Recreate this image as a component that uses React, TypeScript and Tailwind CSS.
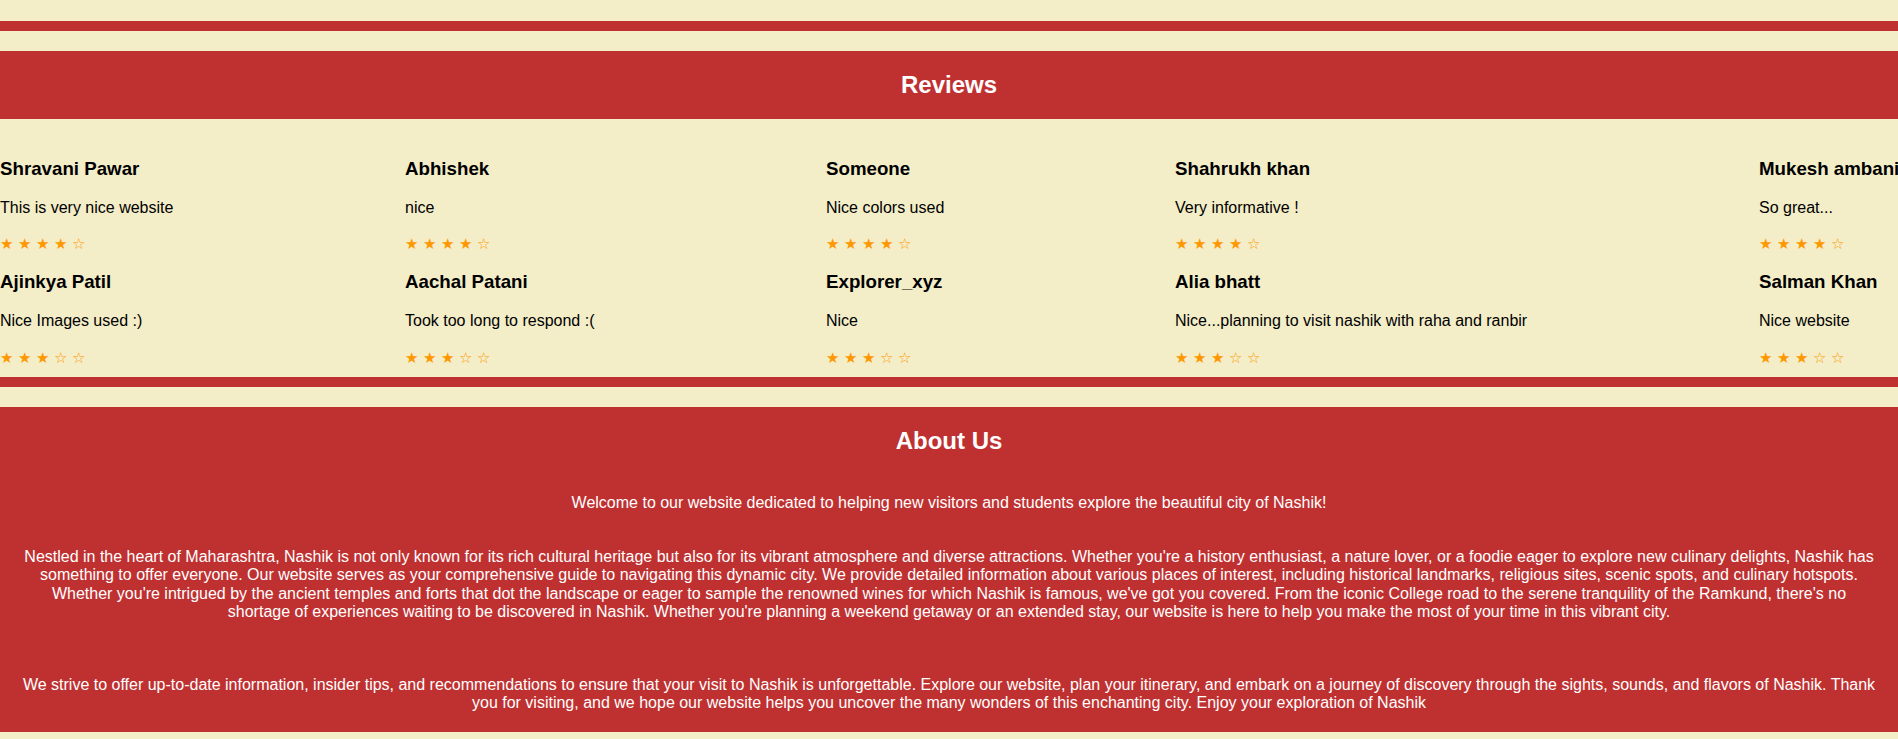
import React from "react";

type Review = { name: string; text: string; stars: number };

const reviews: Review[] = [
  { name: "Shravani Pawar", text: "This is very nice website", stars: 4 },
  { name: "Abhishek", text: "nice", stars: 4 },
  { name: "Someone", text: "Nice colors used", stars: 4 },
  { name: "Shahrukh khan", text: "Very informative !", stars: 4 },
  { name: "Mukesh ambani", text: "So great...", stars: 4 },
  { name: "Ajinkya Patil", text: "Nice Images used :)", stars: 3 },
  { name: "Aachal Patani", text: "Took too long to respond :(", stars: 3 },
  { name: "Explorer_xyz", text: "Nice", stars: 3 },
  { name: "Alia bhatt", text: "Nice...planning to visit nashik with raha and ranbir", stars: 3 },
  { name: "Salman Khan", text: "Nice website", stars: 3 },
];

function Stars({ n }: { n: number }) {
  return (
    <div className="flex h-[18.4px] items-center text-[#ff9800] text-[15px] leading-[18.4px] font-['DejaVu_Sans',sans-serif]">
      {[0, 1, 2, 3, 4].map((i) => (
        <span key={i} className="w-[18px] shrink-0">
          {i < n ? "★" : "☆"}
        </span>
      ))}
    </div>
  );
}

function ReviewCard({ r }: { r: Review }) {
  return (
    <div className="whitespace-nowrap">
      <h3 className="text-[18.72px] leading-[21.5px] font-bold text-black">{r.name}</h3>
      <p className="mt-[19px] text-[16px] leading-[18.4px] text-black">{r.text}</p>
      <div className="mt-[18.5px]">
        <Stars n={r.stars} />
      </div>
    </div>
  );
}

export default function App() {
  return (
    <div className="h-[739px] w-full overflow-hidden bg-[#F3EDC8] pt-[21px] font-['Liberation_Sans',Arial,sans-serif]">
      <div className="h-[10px] bg-[#BF3131]" />
      <div className="mt-[20px] flex h-[68px] items-center justify-center bg-[#BF3131]">
        <h2 className="text-[24px] leading-[27.6px] font-bold text-white">Reviews</h2>
      </div>
      <section className="grid grid-cols-[405px_421px_349px_584px_1fr] gap-y-[17.5px] pt-[39px] pb-[9.5px]">
        {reviews.map((r) => (
          <ReviewCard key={r.name} r={r} />
        ))}
      </section>
      <div className="h-[10px] bg-[#BF3131]" />
      <section className="mt-[20px] bg-[#BF3131] px-5 pt-[20px] pb-[19.7px] text-center text-white">
        <h2 className="text-[24px] leading-[27.6px] font-bold">About Us</h2>
        <p className="mt-[40px] text-[16px] leading-[18.3px]">
          Welcome to our website dedicated to helping new visitors and students explore the beautiful city of Nashik!
        </p>
        <p className="mt-[35.5px] text-[16px] leading-[18.3px]">
          Nestled in the heart of Maharashtra, Nashik is not only known for its rich cultural heritage but also for its vibrant atmosphere and diverse attractions. Whether you're a history enthusiast, a nature lover, or a foodie eager to explore new culinary delights, Nashik has something to offer everyone. Our website serves as your comprehensive guide to navigating this dynamic city. We provide detailed information about various places of interest, including historical landmarks, religious sites, scenic spots, and culinary hotspots. Whether you're intrigued by the ancient temples and forts that dot the landscape or eager to sample the renowned wines for which Nashik is famous, we've got you covered. From the iconic College road to the serene tranquility of the Ramkund, there's no shortage of experiences waiting to be discovered in Nashik. Whether you're planning a weekend getaway or an extended stay, our website is here to help you make the most of your time in this vibrant city.
        </p>
        <p className="mt-[54.7px] text-[16px] leading-[18.3px]">
          We strive to offer up-to-date information, insider tips, and recommendations to ensure that your visit to Nashik is unforgettable. Explore our website, plan your itinerary, and embark on a journey of discovery through the sights, sounds, and flavors of Nashik. Thank you for visiting, and we hope our website helps you uncover the many wonders of this enchanting city. Enjoy your exploration of Nashik
        </p>
      </section>
    </div>
  );
}
